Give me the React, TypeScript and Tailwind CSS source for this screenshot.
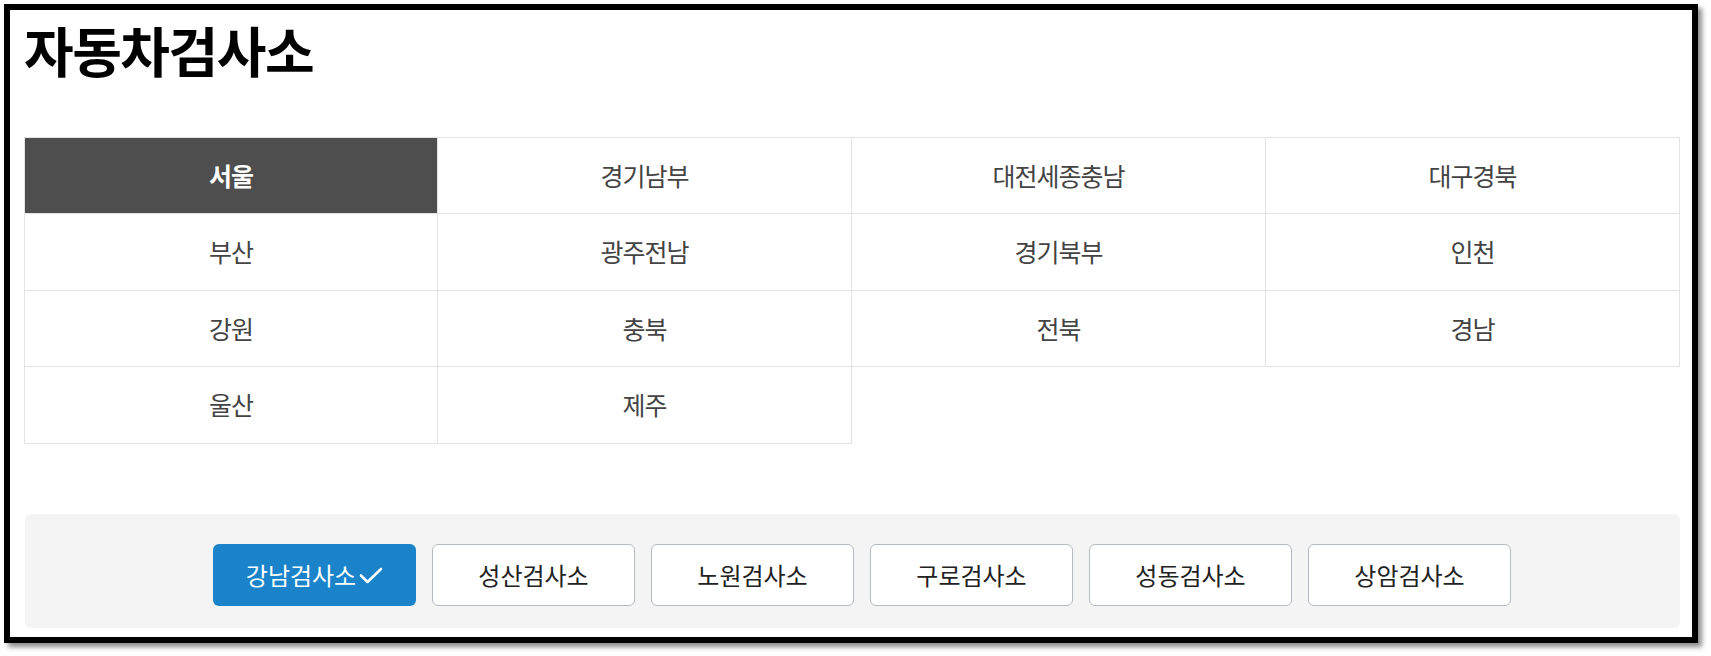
const regions = [
  "서울", "경기남부", "대전세종충남", "대구경북",
  "부산", "광주전남", "경기북부", "인천",
  "강원", "충북", "전북", "경남",
  "울산", "제주",
];

const centers = ["강남검사소", "성산검사소", "노원검사소", "구로검사소", "성동검사소", "상암검사소"];

const CheckIcon = () => (
  <svg width="24" height="17" viewBox="0 0 24 17" fill="none" className="ml-[3px]">
    <path d="M2 8.5 L8.5 15 L22 2" stroke="white" strokeWidth="2.6" strokeLinecap="round" strokeLinejoin="round" />
  </svg>
);

export default function App() {
  return (
    <div className="bg-white w-[1711px] h-[656px] pt-[4px] pl-[4px] font-['Noto_Sans_CJK_KR',sans-serif]">
      <div className="w-[1694px] h-[639px] border-[6px] border-black bg-white pl-[14px] pr-[12px] shadow-[4px_4px_5px_rgba(0,0,0,0.45)]">
        <h1 className="mt-[13px] h-[54px] text-[54px] leading-[54px] font-bold tracking-[-1.5px] text-black">
          자동차검사소
        </h1>

        <div className="mt-[60px] grid grid-cols-4">
          {regions.map((name, i) => (
            <div
              key={name}
              className={
                "h-[76.75px] flex items-center justify-center border-r border-b border-[#e3e3e3] text-[25px] tracking-[-1px] " +
                (i < 4 ? "border-t " : "") +
                (i % 4 === 0 ? "border-l " : "") +
                (i === 0 ? "bg-[#4e4e4e] border-[#4e4e4e] text-white font-bold" : "bg-white text-[#444]")
              }
            >
              {name}
            </div>
          ))}
        </div>

        <div className="mt-[70px] ml-px h-[114px] rounded-[6px] bg-[#f4f4f4] flex justify-center items-start pt-[30px] pl-[19px] gap-[16px]">
          {centers.map((name, i) =>
            i === 0 ? (
              <button
                key={name}
                className="w-[203px] h-[62px] rounded-[6px] bg-[#1a83c9] text-white text-[24px] font-normal flex items-center justify-center"
              >
                {name}
                <CheckIcon />
              </button>
            ) : (
              <button
                key={name}
                className="w-[203px] h-[62px] rounded-[6px] bg-white border border-[#b5bac3] text-[#222] text-[24px] font-normal flex items-center justify-center"
              >
                {name}
              </button>
            )
          )}
        </div>
      </div>
    </div>
  );
}
